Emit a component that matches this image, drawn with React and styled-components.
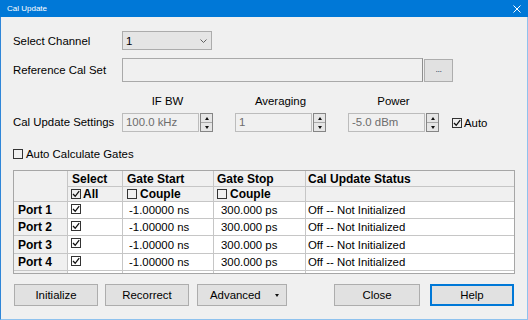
import styled, { createGlobalStyle } from "styled-components";

const GlobalStyle = createGlobalStyle`
  html, body { margin: 0; padding: 0; background: #f0f0f0; }
  body {
    font-family: "Liberation Sans", Arial, sans-serif;
    font-size: 11.4px;
    color: #000;
  }
  * { box-sizing: border-box; }
`;

const Window = styled.div`
  width: 528px;
  height: 320px;
  background: #f0f0f0;
  border: 1px solid #8fc2ee;
  border-left-color: #2f86d8;
  border-top: none;
  display: flex;
  flex-direction: column;
`;

const TitleBar = styled.div`
  height: 17px;
  margin: 0 -1px;
  padding: 0 7px 0 7px;
  background: #0078d7;
  color: #fff;
  font-size: 8px;
  display: flex;
  align-items: center;
  justify-content: space-between;
`;

const Body = styled.div`
  padding: 14px 12px 0 12px;
  display: flex;
  flex-direction: column;
`;

const FormRow = styled.div`
  display: flex;
  align-items: ${(p) => p.$align || "center"};
  height: ${(p) => p.$h}px;
  margin-top: ${(p) => p.$mt || 0}px;
`;

const Label = styled.div`
  width: 109px;
  flex: none;
  line-height: 19px;
  padding-top: ${(p) => p.$dy || 0}px;
`;

const Combo = styled.div`
  width: 90px;
  height: 19px;
  background: #e5e5e5;
  border: 1px solid #acacac;
  display: flex;
  align-items: center;
  justify-content: space-between;
  padding: 0 4px 0 3px;
`;

const TextBox = styled.div`
  width: 301px;
  height: 24px;
  background: #f0f0f0;
  border: 1px solid #a9a9a9;
  border-right-color: #8e8e8e;
`;

const SmallButton = styled.div`
  width: 29px;
  height: 23px;
  margin-left: 1px;
  background: #e1e1e1;
  border: 1px solid #adadad;
  display: flex;
  align-items: center;
  justify-content: center;
  font-size: 9px;
  color: #3a4a6a;
  letter-spacing: -0.5px;
  padding-bottom: 3px;
`;

const SpinGroup = styled.div`
  display: flex;
  flex-direction: column;
  width: 91px;
  margin-right: ${(p) => p.$mr}px;
`;

const GroupHead = styled.div`
  height: 14px;
  line-height: 14px;
  text-align: center;
  margin-bottom: 5px;
`;

const SpinRow = styled.div`
  display: flex;
  height: 19px;
`;

const SpinInput = styled.div`
  width: 78px;
  height: 19px;
  background: #f0f0f0;
  border: 1px solid #bcbcbc;
  color: #6d6d6d;
  padding-left: 3px;
  line-height: 17px;
`;

const SpinButtons = styled.div`
  width: 13px;
  height: 19px;
  border: 1px solid #858585;
  background: #e6e6e6;
  display: flex;
  flex-direction: column;
  margin-left: 1px;
`;

const SpinHalf = styled.div`
  flex: 1;
  display: flex;
  align-items: center;
  justify-content: center;
  border-top: ${(p) => (p.$bottom ? "1px solid #a8a8a8" : "none")};
`;

const Tri = styled.div`
  width: 0;
  height: 0;
  border-left: 2.5px solid transparent;
  border-right: 2.5px solid transparent;
  ${(p) =>
    p.$down
      ? "border-top: 3px solid #111;"
      : "border-bottom: 3px solid #111;"}
`;

const CheckLabel = styled.label`
  display: flex;
  align-items: center;
  gap: ${(p) => p.$gap ?? 3}px;
  line-height: 14px;
  font-weight: ${(p) => (p.$bold ? "bold" : "normal")};
`;

const Grid = styled.div`
  margin-top: 9px;
  height: 104px;
  border: 1px solid #a6a6a6;
  background: #fff;
  display: grid;
  grid-template-columns: 54px 55px 91px 92px 1fr;
  grid-template-rows: 16px 15px 17px 17px 18px 17px 1fr;
  overflow: hidden;
`;

const Cell = styled.div`
  border-right: ${(p) => (p.$last ? "none" : "1px solid #c6c6c6")};
  border-bottom: ${(p) => (p.$open ? "none" : "1px solid #c6c6c6")};
  background: ${(p) => (p.$head ? "#f0f0f0" : "#fff")};
  font-weight: ${(p) => (p.$head ? "bold" : "normal")};
  font-size: ${(p) => (p.$head ? "12px" : "11.4px")};
  padding-left: ${(p) => p.$pad ?? 4}px;
  grid-row: ${(p) => (p.$span ? "span 2" : "auto")};
  display: flex;
  align-items: ${(p) => (p.$top ? "flex-start" : "center")};
  padding-top: ${(p) => (p.$top ? 2 : 0)}px;
  white-space: nowrap;
  overflow: hidden;
`;

const ButtonBar = styled.div`
  display: flex;
  margin-top: 10px;
  padding-left: 1px;
`;

const Button = styled.div`
  width: ${(p) => p.$w}px;
  height: 22px;
  margin-right: ${(p) => p.$mr || 0}px;
  background: #e1e1e1;
  border: 1px solid ${(p) => (p.$focus ? "#0078d7" : "#adadad")};
  box-shadow: ${(p) => (p.$focus ? "inset 0 0 0 1px #0078d7" : "none")};
  display: flex;
  align-items: center;
  justify-content: ${(p) => (p.$split ? "space-between" : "center")};
  padding: ${(p) => (p.$split ? "0 7px 0 12px" : "0")};
`;

const Spacer = styled.div`
  flex: 1;
`;

function CheckBox({ checked }) {
  return (
    <svg width="10" height="10" viewBox="0 0 10 10">
      <rect x="0.5" y="0.5" width="9" height="9" fill="none" stroke="#333" />
      {checked && (
        <path d="M2 5 L4.2 7.3 L8.2 2.2" fill="none" stroke="#111" strokeWidth="1.3" />
      )}
    </svg>
  );
}

function Spin({ value, mr, head }) {
  return (
    <SpinGroup $mr={mr}>
      <GroupHead>{head}</GroupHead>
      <SpinRow>
        <SpinInput>{value}</SpinInput>
        <SpinButtons>
          <SpinHalf>
            <Tri />
          </SpinHalf>
          <SpinHalf $bottom>
            <Tri $down />
          </SpinHalf>
        </SpinButtons>
      </SpinRow>
    </SpinGroup>
  );
}

const ports = ["Port 1", "Port 2", "Port 3", "Port 4"];

export default function App() {
  return (
    <>
      <GlobalStyle />
      <Window>
        <TitleBar>
          <span>Cal Update</span>
          <svg width="8" height="8" viewBox="0 0 8 8">
            <path d="M0.5 0.5 L7.5 7.5 M7.5 0.5 L0.5 7.5" stroke="#fff" strokeWidth="1" />
          </svg>
        </TitleBar>
        <Body>
          <FormRow $h={19}>
            <Label $dy={2}>Select Channel</Label>
            <Combo>
              <span>1</span>
              <svg width="7" height="4" viewBox="0 0 7 4">
                <path d="M0.5 0.5 L3.5 3.5 L6.5 0.5" fill="none" stroke="#606060" />
              </svg>
            </Combo>
          </FormRow>
          <FormRow $h={24} $mt={8}>
            <Label $dy={1}>Reference Cal Set</Label>
            <TextBox />
            <SmallButton>...</SmallButton>
          </FormRow>
          <FormRow $h={38} $mt={12} $align="flex-end">
            <Label>Cal Update Settings</Label>
            <Spin head="IF BW" value="100.0 kHz" mr={22} />
            <Spin head="Averaging" value="1" mr={22} />
            <Spin head="Power" value="-5.0 dBm" mr={13} />
            <FormRow $h={19}>
              <CheckLabel $gap={2}>
                <CheckBox checked />
                Auto
              </CheckLabel>
            </FormRow>
          </FormRow>
          <FormRow $h={14} $mt={15}>
            <CheckLabel>
              <CheckBox />
              Auto Calculate Gates
            </CheckLabel>
          </FormRow>
          <Grid>
            <Cell $head $span />
            <Cell $head>Select</Cell>
            <Cell $head $pad={4}>Gate Start</Cell>
            <Cell $head $pad={3}>Gate Stop</Cell>
            <Cell $head $last $pad={2}>Cal Update Status</Cell>
            <Cell $head $pad={3}>
              <CheckLabel $bold $gap={2}>
                <CheckBox checked />
                All
              </CheckLabel>
            </Cell>
            <Cell $head $pad={4}>
              <CheckLabel $bold $gap={3}>
                <CheckBox />
                Couple
              </CheckLabel>
            </Cell>
            <Cell $head $pad={3}>
              <CheckLabel $bold $gap={3}>
                <CheckBox />
                Couple
              </CheckLabel>
            </Cell>
            <Cell $head $last />
            {ports.map((p) => [
              <Cell key={p + "h"} $head>{p}</Cell>,
              <Cell key={p + "s"} $top $pad={3}>
                <CheckBox checked />
              </Cell>,
              <Cell key={p + "a"} $pad={6}>-1.00000 ns</Cell>,
              <Cell key={p + "b"} $pad={7}>300.000 ps</Cell>,
              <Cell key={p + "c"} $last $pad={2}>Off -- Not Initialized</Cell>,
            ])}
            <Cell $head $open />
            <Cell $open />
            <Cell $open />
            <Cell $open />
            <Cell $open $last />
          </Grid>
          <ButtonBar>
            <Button $w={84} $mr={7}>Initialize</Button>
            <Button $w={84} $mr={8}>Recorrect</Button>
            <Button $w={90} $split>
              <span>Advanced</span>
              <Tri $down />
            </Button>
            <Spacer />
            <Button $w={86} $mr={10}>Close</Button>
            <Button $w={84} $focus $mr={1}>Help</Button>
          </ButtonBar>
        </Body>
      </Window>
    </>
  );
}
